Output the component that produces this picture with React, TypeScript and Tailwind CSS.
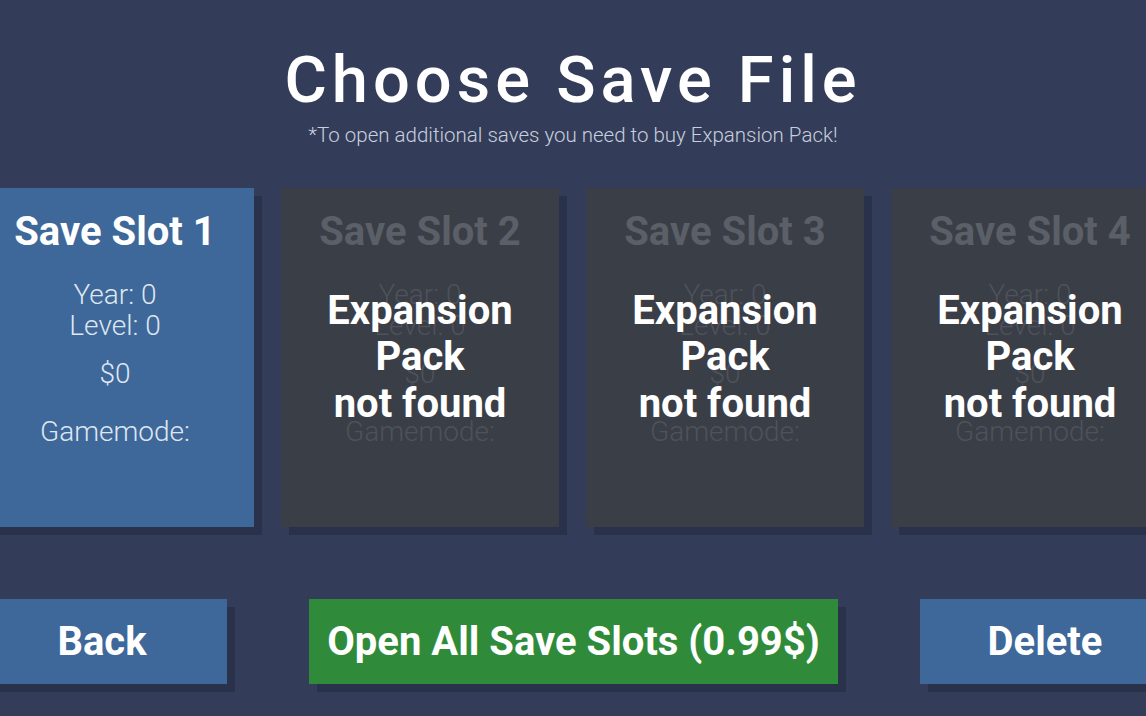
const slots = [1, 2, 3, 4];

function SlotInfo({ n, locked }: { n: number; locked: boolean }) {
  const title = locked ? "text-[#5b5f67]" : "text-white";
  const body = locked ? "text-[#4e525a]" : "text-[#dfe6f1]";
  return (
    <div className="flex flex-col items-center pt-[20px]">
      <div className={`text-[40px] font-bold leading-[48px] ${title}`}>Save Slot {n}</div>
      <div className={`mt-[23px] flex flex-col items-center text-[28px] font-light leading-[31px] ${body}`}>
        <span>Year: 0</span>
        <span>Level: 0</span>
        <span className="mt-[17px]">$0</span>
        <span className="mt-[27px]">Gamemode:</span>
      </div>
    </div>
  );
}

export default function App() {
  return (
    <div
      className="w-[1146px] h-[716px] overflow-hidden bg-[#333d59] flex flex-col"
      style={{ fontFamily: "Roboto, 'Liberation Sans', sans-serif" }}
    >
      <div className="flex flex-col items-center pt-[40px]">
        <h1 className="text-[65px] font-medium leading-[80px] tracking-[5px] text-white">Choose Save File</h1>
        <p className="mt-[3px] text-[20.5px] font-light leading-[24px] text-[#c9cfdf]">
          *To open additional saves you need to buy Expansion Pack!
        </p>
      </div>

      <div className="mt-[41px] ml-[-24px] flex gap-[27px]">
        {slots.map((n) => {
          const locked = n > 1;
          return (
            <div
              key={n}
              className={`relative w-[278px] h-[339px] shrink-0 shadow-[8px_8px_0_#29314b] ${
                locked ? "bg-[#3a3e47]" : "bg-[#3e6899]"
              }`}
            >
              <SlotInfo n={n} locked={locked} />
              {locked && (
                <div className="absolute inset-0 flex items-center justify-center">
                  <div className="text-center text-[40px] font-bold leading-[46.5px] text-white">
                    Expansion
                    <br />
                    Pack
                    <br />
                    not found
                  </div>
                </div>
              )}
            </div>
          );
        })}
      </div>

      <div className="mt-[72px] ml-[-23px] mr-[-24px] flex justify-between">
        <button className="w-[250px] h-[85px] bg-[#3e6899] shadow-[8px_8px_0_#29314b] text-[40px] font-bold text-white">
          Back
        </button>
        <button className="w-[529px] h-[85px] bg-[#2f8b3a] shadow-[8px_8px_0_#29314b] text-[40px] font-bold text-white">
          Open All Save Slots (0.99$)
        </button>
        <button className="w-[250px] h-[85px] bg-[#3e6899] shadow-[8px_8px_0_#29314b] text-[40px] font-bold text-white">
          Delete
        </button>
      </div>
    </div>
  );
}
